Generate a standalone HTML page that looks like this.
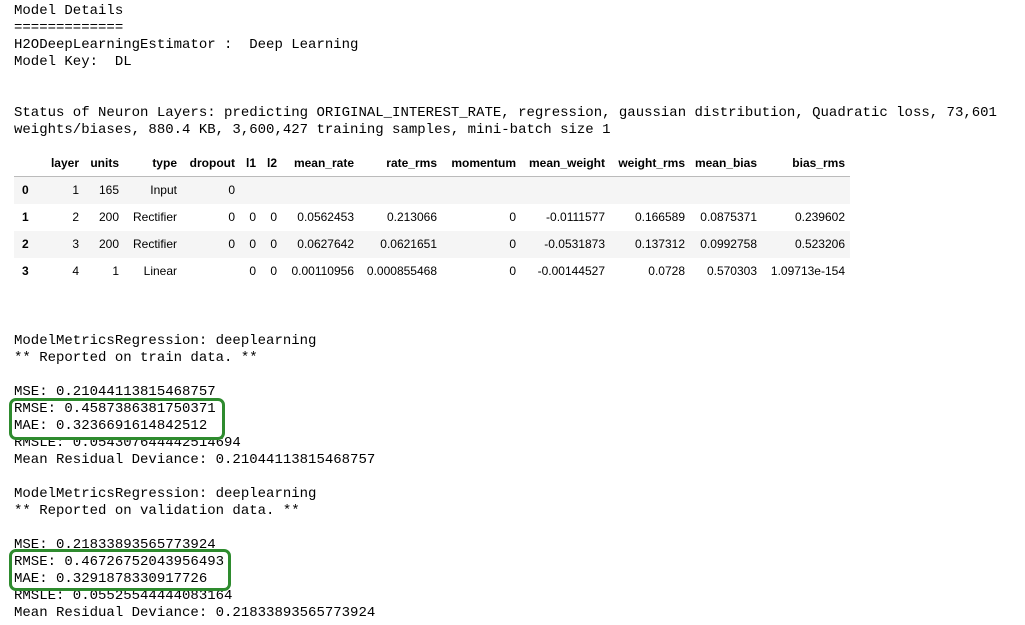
<!DOCTYPE html>
<html><head><meta charset="utf-8"><style>
body{margin:0;width:1025px;height:625px;background:#fff;position:relative;overflow:hidden}
.m{position:absolute;left:14px;font-family:"Liberation Mono",monospace;font-size:14px;line-height:17px;color:#000;white-space:pre}
.t{position:absolute;font-family:"Liberation Sans",sans-serif;font-size:12px;color:#000;text-align:right;white-space:nowrap;line-height:14px}
.b{font-weight:bold}
.band{position:absolute;left:14px;width:836px;height:27px;background:#f5f5f5}
.box{position:absolute;border:3px solid #2e8b2e;border-radius:7px}
</style></head><body>
<div class="m" style="top:3px">Model Details
=============
H2ODeepLearningEstimator :  Deep Learning
Model Key:  DL


Status of Neuron Layers: predicting ORIGINAL_INTEREST_RATE, regression, gaussian distribution, Quadratic loss, 73,601
weights/biases, 880.4 KB, 3,600,427 training samples, mini-batch size 1</div>
<div style="position:absolute;left:14px;top:176px;width:836px;height:1px;background:#bbb"></div>
<div class="band" style="top:177px"></div>
<div class="band" style="top:231px"></div>
<div id="tbl"></div>
<div class="m" style="top:333px">ModelMetricsRegression: deeplearning
** Reported on train data. **

MSE: 0.21044113815468757
RMSE: 0.4587386381750371
MAE: 0.3236691614842512
RMSLE: 0.054307644442514694
Mean Residual Deviance: 0.21044113815468757

ModelMetricsRegression: deeplearning
** Reported on validation data. **

MSE: 0.21833893565773924
RMSE: 0.46726752043956493
MAE: 0.3291878330917726
RMSLE: 0.05525544444083164
Mean Residual Deviance: 0.21833893565773924</div>
<div class="box" style="left:9px;top:398px;width:210px;height:36px"></div>
<div class="box" style="left:9px;top:549px;width:216px;height:36px"></div>
<script>
var R=[79,119,177,235,256,277,354,437,516,605,685,757,845];
var H=["layer","units","type","dropout","l1","l2","mean_rate","rate_rms","momentum","mean_weight","weight_rms","mean_bias","bias_rms"];
var D=[["1","165","Input","0","","","","","","","","",""],
["2","200","Rectifier","0","0","0","0.0562453","0.213066","0","-0.0111577","0.166589","0.0875371","0.239602"],
["3","200","Rectifier","0","0","0","0.0627642","0.0621651","0","-0.0531873","0.137312","0.0992758","0.523206"],
["4","1","Linear","","0","0","0.00110956","0.000855468","0","-0.00144527","0.0728","0.570303","1.09713e-154"]];
var s="";
function c(x,y,t,b){s+='<div class="t'+(b?' b':'')+'" style="right:'+(1025-x)+'px;top:'+(y-7)+'px">'+t+'</div>';}
H.forEach(function(h,i){c(R[i],163,h,1);});
D.forEach(function(r,j){var y=190+27*j;s+='<div class="t b" style="left:22px;text-align:left;top:'+(y-7)+'px">'+j+'</div>';r.forEach(function(v,i){c(R[i],y,v,0);});});
document.getElementById("tbl").innerHTML=s;
</script>
</body></html>
